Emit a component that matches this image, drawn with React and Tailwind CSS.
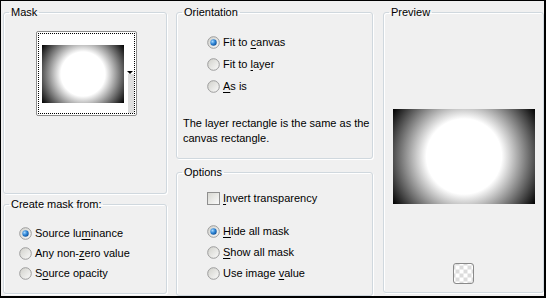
import React from "react";

const Radio = ({ checked }) => (
  <svg width="13" height="13" viewBox="0 0 13 13" className="shrink-0">
    <defs>
      <linearGradient id="rfill" x1="0" y1="0" x2="1" y2="1">
        <stop offset="0" stopColor="#d0d0ca" />
        <stop offset="1" stopColor="#fbfbfb" />
      </linearGradient>
      <radialGradient id="rdot" cx="0.35" cy="0.35" r="0.75">
        <stop offset="0" stopColor="#a6d8ff" />
        <stop offset="0.5" stopColor="#2f86d6" />
        <stop offset="1" stopColor="#0c4a92" />
      </radialGradient>
    </defs>
    <circle cx="6.5" cy="6.5" r="5.8" fill="url(#rfill)" stroke="#9c9c9c" strokeWidth="1" />
    {checked && <circle cx="6.5" cy="6.5" r="3.2" fill="url(#rdot)" />}
  </svg>
);

const Check = () => (
  <div className="w-[13px] h-[13px] shrink-0 border border-[#8f8f8f] bg-[linear-gradient(135deg,#d8d8d2,#fbfbfb)]" />
);

// label with one underlined access key
const Label = ({ text, k }) => (
  <span>
    {text.slice(0, k)}
    <span className="underline underline-offset-[2px]">{text[k]}</span>
    {text.slice(k + 1)}
  </span>
);

const Option = ({ checked, text, k }) => (
  <div className="flex items-center gap-[3px] h-[13px]">
    <Radio checked={checked} />
    <Label text={text} k={k} />
  </div>
);

const Group = ({ title, className, children }) => (
  <fieldset className={`border border-[#d0d8de] rounded-[3px] shadow-[inset_1px_1px_0_#fff,1px_1px_0_#fff] ${className}`}>
    <legend className="ml-[5px] px-[2px] leading-[13px]">{title}</legend>
    {children}
  </fieldset>
);

const App = () => {
  return (
    <div
      className="w-[546px] h-[298px] bg-[#f0f0f0] border-t border-l border-r-2 border-b-2 border-black flex pl-[2px] text-[11px] text-black overflow-hidden"
      style={{ fontFamily: '"Liberation Sans", Arial, sans-serif' }}
    >
      {/* left column */}
      <div className="w-[164px] flex flex-col pt-[5px]">
        <Group title="Mask" className="h-[188px]">
          <div className="ml-[32px] mt-[12px] w-[101px] h-[85px] border border-[#8c8c8c] rounded-[2px] bg-white p-[1px]">
            <div className="relative w-full h-full border border-dotted border-black">
              <div className="absolute left-[3px] top-[11px] w-[82px] h-[58px] bg-[radial-gradient(circle,#fff_44%,#000_100%)]" />
              <div className="absolute right-0 top-[40px] bottom-0 w-[6px] bg-[#dedede]" />
              <div className="absolute right-[1px] top-[37px] w-0 h-0 border-l-[3px] border-r-[3px] border-t-[3px] border-l-transparent border-r-transparent border-t-black" />
            </div>
          </div>
        </Group>
        <Group title="Create mask from:" className="h-[96px] mt-[4px]">
          <div className="flex flex-col gap-[7px] pl-[15px] pt-[16px]">
            <Option checked text="Source luminance" k={9} />
            <Option text="Any non-zero value" k={8} />
            <Option text="Source opacity" k={1} />
          </div>
        </Group>
      </div>

      {/* middle column */}
      <div className="w-[197px] ml-[9px] flex flex-col pt-[5px]">
        <Group title="Orientation" className="h-[153px]">
          <div className="flex flex-col gap-[9px] pl-[30px] pt-[17px]">
            <Option checked text="Fit to canvas" k={7} />
            <Option text="Fit to layer" k={7} />
            <Option text="As is" k={0} />
          </div>
          <p className="pl-[6px] pt-[23px] leading-[15px]">
            The layer rectangle is the same as the canvas rectangle.
          </p>
        </Group>
        <Group title="Options" className="h-[130px] mt-[7px]">
          <div className="flex items-center gap-[3px] pl-[30px] pt-[13px] h-[13px] box-content">
            <Check />
            <Label text="Invert transparency" k={0} />
          </div>
          <div className="flex flex-col gap-[8px] pl-[30px] pt-[20px]">
            <Option checked text="Hide all mask" k={0} />
            <Option text="Show all mask" k={0} />
            <Option text="Use image value" k={10} />
          </div>
        </Group>
      </div>

      {/* right column */}
      <div className="w-[161px] ml-[10px] flex flex-col pt-[5px]">
        <Group title="Preview" className="h-[287px] flex flex-col items-center">
          <div className="mx-auto mt-[90px] w-[142px] h-[95px] bg-[radial-gradient(circle,#fff_44%,#000_100%)]" />
          <div className="mx-auto mt-[59px] w-[21px] h-[21px] rounded-[3px] border border-[#8a8a8a] bg-white bg-[repeating-conic-gradient(#dcdcdc_0_25%,#fff_0_50%)] bg-[length:8px_8px] bg-center" />
        </Group>
      </div>
    </div>
  );
};

export default App;
